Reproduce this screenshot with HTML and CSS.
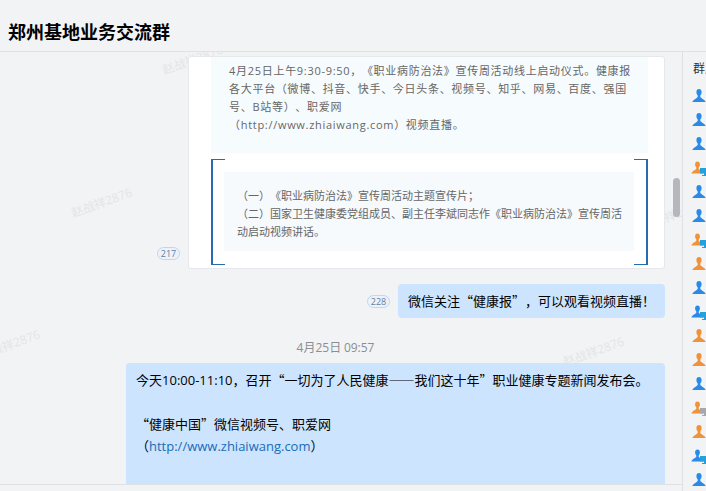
FILE: index.html
```html
<!DOCTYPE html>
<html lang="zh-CN">
<head>
    <meta charset="UTF-8">
    <title>郑州基地业务交流群</title>
    <link rel="stylesheet" href="styles.css">
</head>
<body>
    <!-- Person icon, reused by the member list -->
    <svg class="defs">
        <symbol id="person" viewBox="0 0 14 14">
            <path d="M7 0C5.300 0 4.400 1.300 4.400 3c0 1.400.5 2.600 1.300 3.400v1.500C4.600 9.200 2 10.200 .5 12.400V13h13v-.6C12 10.200 9.400 9.200 8.300 7.900V6.400C9.100 5.600 9.600 4.400 9.600 3 9.600 1.300 8.700 0 7 0z"/>
        </symbol>
        <symbol id="pc" viewBox="0 0 10 8">
            <path d="M0 0h10v5.500H6V7h2v1H2V7h2V5.500H0z"/>
        </symbol>
    </svg>

    <!-- Header -->
    <header class="title-bar">
        <h1>郑州基地业务交流群</h1>
    </header>

    <div class="content">
        <!-- Messages -->
        <main class="chat">
            <span class="mark mark-1">赵战祥2876</span>
            <span class="mark mark-2">赵战祥2876</span>
            <span class="mark mark-3">赵战祥2876</span>
            <span class="mark mark-4">赵战祥2876</span>
            <span class="mark mark-5">赵战祥2876</span>

            <div class="row row-first">
                <span class="read-count">217</span>
                <div class="card">
                    <div class="card-notice">
                        <p><span class="lat">4</span>月<span class="lat">25</span>日上午<span class="lat">9:30-9:50</span>，《职业病防治法》宣传周活动线上启动仪式。健康报<br>各大平台（微博、抖音、快手、今日头条、视频号、知乎、网易、百度、强国<br>号、<span class="lat">B</span>站等）、职爱网</p>
                        <p>（<span class="lat">http://www.zhiaiwang.com</span>）视频直播。</p>
                    </div>
                    <div class="card-bracket">
                        <div class="card-list">
                            <p>（一）《职业病防治法》宣传周活动主题宣传片；</p>
                            <p>（二）国家卫生健康委党组成员、副主任李斌同志作《职业病防治法》宣传周活<br>动启动视频讲话。</p>
                        </div>
                    </div>
                </div>
            </div>

            <div class="row row-short">
                <span class="read-count">228</span>
                <div class="bubble">微信关注“健康报”，可以观看视频直播！</div>
            </div>

            <div class="time"><span class="lat">4</span>月<span class="lat">25</span>日 <span class="lat">09:57</span></div>

            <div class="bubble bubble-long">
                <p>今天<span class="lat">10:00-11:10</span>，召开“一切为了人民健康——我们这十年”职业健康专题新闻发布会。</p>
                <p class="gap">“健康中国”微信视频号、职爱网</p>
                <p>（<a class="lat" href="#">http://www.zhiaiwang.com</a>）</p>
            </div>

            <div class="chat-scroll"></div>
        </main>

        <!-- Members -->
        <aside class="members">
            <div class="members-title">群成员</div>
            <ul id="list"></ul>
        </aside>
    </div>

    <script>
        const people = ["b","b","b","op","b","b","op","o","b","bp","o","o","b","og","o","bp","b"];
        const list = document.getElementById("list");
        people.forEach((p) => {
            const cls = p[0] === "b" ? "blue" : "orange";
            const pc = p[1] ? `<svg class="pc ${p[1] === "g" ? "pc-gray" : ""}"><use href="#pc"/></svg>` : "";
            const li = document.createElement("li");
            li.innerHTML = `<svg class="person ${cls} ${p[1] ? "small" : ""}"><use href="#person"/></svg>${pc}`;
            list.appendChild(li);
        });
    </script>
</body>
</html>
```

FILE: styles.css
```css
html, body {
    margin: 0;
    padding: 0;
}
body {
    width: 706px;
    height: 491px;
    overflow: hidden;
    background-color: #f2f3f5;
    font-family: "Noto Sans CJK SC", sans-serif;
    text-spacing-trim: space-all;
    color: #000;
}
p {
    margin: 0;
}
.lat {
    font-family: "Open Sans", sans-serif;
    line-height: 0;
}
.defs {
    display: none;
}
.title-bar {
    height: 52px;
    box-sizing: border-box;
    border-bottom: 1px solid #dfe1e4;
    padding: 20px 0 0 8px;
}
h1 {
    margin: 0;
    font-size: 18px;
    line-height: 22px;
    font-weight: bold;
}
.content {
    display: flex;
    height: 439px;
}
.chat {
    position: relative;
    width: 683px;
    height: 433px;
    box-sizing: border-box;
    padding: 4px 17px 0 126px;
    border-bottom: 1px solid #dfe1e4;
    overflow: hidden;
}
.row {
    display: flex;
    justify-content: flex-end;
    align-items: flex-end;
}
.read-count {
    box-sizing: border-box;
    width: 23px;
    height: 13px;
    border: 1px solid #c3d5ea;
    border-radius: 7px;
    background-color: #edf2f8;
    color: #5f7fa3;
    font-family: "Open Sans", sans-serif;
    font-size: 9px;
    line-height: 11px;
    text-align: center;
}
.row-first .read-count {
    margin: 0 8px 9px 0;
}
.card {
    position: relative;
    z-index: 1;
    box-sizing: border-box;
    width: 477px;
    height: 213px;
    background-color: #fff;
    border: 1px solid #e6e8eb;
    border-radius: 3px;
    padding: 0 16px 0 22px;
    color: #666;
    font-size: 11px;
    line-height: 18px;
    white-space: nowrap;
}
.card-notice {
    height: 96px;
    box-sizing: border-box;
    padding: 4px 0 0 18px;
    background-color: #f6fbfe;
    letter-spacing: .7px;
}
.card-bracket {
    position: relative;
    height: 106px;
    margin-top: 6px;
    box-sizing: border-box;
    padding: 13px 14px 0 13px;
}
.card-bracket::before,
.card-bracket::after {
    content: "";
    position: absolute;
    top: 0;
    bottom: 0;
    width: 12px;
    border: 1px solid #2a6bb0;
    border-width: 1px 0 1px 2px;
}
.card-bracket::before {
    left: 0;
}
.card-bracket::after {
    right: 0;
    border-width: 1px 2px 1px 0;
}
.card-list {
    height: 79px;
    box-sizing: border-box;
    padding: 14px 0 0 13px;
    background-color: #f6fafd;
}
.bubble {
    position: relative;
    z-index: 1;
    background-color: #cce4fe;
    border-radius: 4px;
    font-size: 13px;
    line-height: 34px;
    height: 34px;
    padding: 0 10px;
    white-space: nowrap;
}
.row-short {
    margin-top: 15px;
}
.row-short .read-count {
    margin: 0 8px 10px 0;
}
.time {
    margin: 19px -6px 0 -126px;
    height: 20px;
    text-align: center;
    color: #8a8f96;
    font-size: 12px;
    line-height: 20px;
}
.bubble-long {
    height: 122px;
    margin-top: 6px;
    padding: 6px 10px 0;
    line-height: 22px;
}
.bubble-long .gap {
    margin-top: 22px;
}
.bubble-long a {
    color: #1a6cb5;
    text-decoration: none;
}
.chat-scroll {
    position: absolute;
    left: 673px;
    top: 126px;
    width: 7px;
    height: 39px;
    border-radius: 4px;
    background-color: #b4b7bb;
}
.mark {
    position: absolute;
    color: #e3e5e8;
    font-family: "Open Sans", "Noto Sans CJK SC", sans-serif;
    font-size: 12px;
    line-height: 16px;
    transform: rotate(-20deg);
    white-space: nowrap;
}
.mark-1 { left: 161px; top: 0; }
.mark-2 { left: 70px; top: 143px; }
.mark-3 { left: -22px; top: 285px; }
.mark-4 { left: 562px; top: 292px; }
.mark-5 { left: 640px; top: 156px; }
.members {
    width: 23px;
    border-left: 1px solid #dfe1e4;
    overflow: hidden;
    white-space: nowrap;
}
.members-title {
    margin: 7px 0 0 10px;
    font-size: 12px;
    line-height: 18px;
    color: #333;
}
ul {
    list-style: none;
    margin: 7px 0 0 0;
    padding: 0;
}
li {
    position: relative;
    height: 24px;
}
.person {
    display: block;
    position: absolute;
    left: 9px;
    top: 5px;
    width: 14px;
    height: 14px;
}
.person.small {
    left: 8px;
    width: 13px;
    height: 14px;
}
.blue {
    fill: #2a8aea;
}
.orange {
    fill: #f0923a;
}
.pc {
    position: absolute;
    left: 17px;
    top: 12px;
    width: 10px;
    height: 8px;
    fill: #26a0dc;
}
.pc-gray {
    fill: #a6a8ab;
}
```
